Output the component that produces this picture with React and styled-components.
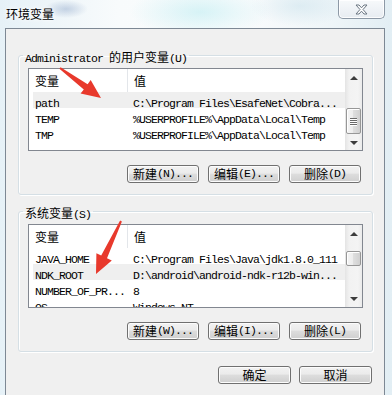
import React from 'react';
import styled, { createGlobalStyle } from 'styled-components';

const GlobalStyle = createGlobalStyle`
  html, body {
    margin: 0;
    padding: 0;
    background: #fff;
  }
  #root {
    width: 392px;
    height: 395px;
  }
`;

// window frame + client
const Window = styled.div`
  position: relative;
  width: 392px;
  height: 395px;
  overflow: hidden;
  display: flex;
  flex-direction: column;
  font-family: "Noto Sans CJK SC", sans-serif;
  color: #000;
  background:
    radial-gradient(ellipse 22px 9px at 66px 9px, rgba(110, 140, 185, 0.35), transparent),
    radial-gradient(ellipse 70px 26px at 200px 12px, rgba(185, 235, 240, 0.55), transparent),
    radial-gradient(ellipse 50px 20px at 300px 6px, rgba(200, 225, 235, 0.5), transparent),
    linear-gradient(to right, #e6f1f7, #f8fbfc 30%, #fbfcfd 60%, #eef5f8 85%, #e2eef4);
`;

const TitleBar = styled.div`
  height: 28px;
  flex: none;
  display: flex;
  justify-content: space-between;
  align-items: flex-start;
`;

const Title = styled.div`
  margin: 6px 0 0 6px;
  font-size: 12px;
  line-height: 16px;
  text-shadow: 0 0 6px #fff, 0 0 3px #fff;
`;

const CloseButton = styled.div`
  width: 47px;
  height: 19px;
  margin-right: 7px;
  box-sizing: border-box;
  border: 1px solid #8d99a6;
  border-top: none;
  border-radius: 0 0 5px 5px;
  background: linear-gradient(#f7f9fb, #e7ecf1);
  box-shadow: inset 0 0 0 1px rgba(255, 255, 255, 0.85);
  display: flex;
  align-items: center;
  justify-content: center;
`;

const Client = styled.div`
  flex: 1;
  margin-left: 5px;
  width: 380px;
  box-sizing: border-box;
  background: #f0f0f0;
  border: 1px solid #7d8894;
  border-bottom: none;
  display: flex;
  flex-direction: column;
`;

const Group = styled.fieldset`
  margin: ${p => p.$top}px 11px 0 12px;
  padding: 0 9px 11px;
  border: 1px solid #d5dfe5;
  border-radius: 3px;
  box-shadow: 1px 1px 0 #fff, inset 1px 1px 0 #fff;
  min-inline-size: 0;
`;

const Legend = styled.legend`
  padding: 0 2px;
  margin-left: -5px;
  height: 14px;
  line-height: 14px;
  white-space: nowrap;
`;

const ListBox = styled.div`
  margin-top: 6px;
  height: ${p => p.$h}px;
  box-sizing: border-box;
  border: 1px solid #828790;
  background: #fff;
  display: flex;
  overflow: hidden;
`;

const Table = styled.div`
  flex: 1;
  min-width: 0;
  overflow: hidden;
`;

const HeaderRow = styled.div`
  display: grid;
  grid-template-columns: 99px 1fr;
  height: 23px;
`;

const HeaderCell = styled.div`
  padding-left: 6px;
  font-size: 12px;
  line-height: 23px;
  border-right: ${p => (p.$divider ? '1px solid #e3e6ea' : 'none')};
`;

const Row = styled.div`
  display: grid;
  grid-template-columns: 94px 1fr;
  margin-left: 4px;
  height: 16px;
  box-sizing: border-box;
  padding-top: 1px;
  line-height: 15px;
  white-space: nowrap;
  background: ${p => (p.$selected ? '#efefef' : 'transparent')};
`;

const Cell = styled.div`
  padding-left: ${p => p.$pad}px;
`;

const ScrollBar = styled.div`
  width: 17px;
  flex: none;
  display: flex;
  flex-direction: column;
  background: linear-gradient(to right, #e4e4e4, #f2f2f2 25%, #f4f4f4 75%, #ebebeb);
`;

const ArrowButton = styled.div`
  height: 17px;
  flex: none;
  display: flex;
  align-items: center;
  justify-content: center;

  &::after {
    content: '';
    border-left: 4px solid transparent;
    border-right: 4px solid transparent;
    ${p => (p.$down ? 'border-top: 4px solid #3d3d3d;' : 'border-bottom: 4px solid #3d3d3d;')}
  }
`;

const Track = styled.div`
  flex: 1;
`;

const Thumb = styled.div`
  margin: ${p => p.$top}px 1px 0;
  height: ${p => p.$h}px;
  box-sizing: border-box;
  border: 1px solid #979797;
  border-radius: 2px;
  background: linear-gradient(to right, #f4f4f4, #ececec 50%, #dedede 50%, #d0d0d0);
  box-shadow: inset 1px 1px 0 #fff;
  display: flex;
  flex-direction: column;
  align-items: center;
  justify-content: center;
  gap: 1px;
`;

const Grip = styled.div`
  width: 7px;
  height: 1px;
  background: #6a6a6a;
  box-shadow: 0 1px 0 #fff;
`;

const ButtonRow = styled.div`
  display: flex;
  justify-content: flex-end;
  gap: 9px;
  margin-top: 14px;
  padding-right: 2px;
`;

const Footer = styled.div`
  display: flex;
  justify-content: flex-end;
  gap: 8px;
  margin: 14px 12px 0 0;
`;

const Button = styled.button`
  width: ${p => p.$w || 72}px;
  height: 18px;
  box-sizing: border-box;
  padding: 0;
  border: 1px solid #707070;
  border-radius: 3px;
  background: linear-gradient(#f2f2f2, #ebebeb 45%, #dddddd 50%, #cfcfcf);
  box-shadow: inset 0 0 0 1px #fcfcfc;
  font: inherit;
  color: #000;
  line-height: 16px;
  display: flex;
  align-items: center;
  justify-content: center;
  white-space: nowrap;
`;

const Latin = styled.span`
  font-family: "Liberation Mono", monospace;
  font-size: 11.5px;
  letter-spacing: -0.9px;
`;

const Han = styled.span`
  font-family: "Noto Sans CJK SC", sans-serif;
  font-size: 12px;
`;

const Overlay = styled.svg`
  position: absolute;
  left: 0;
  top: 0;
  pointer-events: none;
`;

const HAN = /([\u3400-\u9fff]+)/;

function Txt({ children }) {
  return String(children)
    .split(HAN)
    .filter(Boolean)
    .map((s, i) => (HAN.test(s) ? <Han key={i}>{s}</Han> : <Latin key={i}>{s}</Latin>));
}

function arrowPoints(x1, y1, x2, y2) {
  const dx = x2 - x1;
  const dy = y2 - y1;
  const len = Math.hypot(dx, dy);
  const ux = dx / len;
  const uy = dy / len;
  const nx = -uy;
  const ny = ux;
  const head = 19;
  const bx = x2 - ux * head;
  const by = y2 - uy * head;
  const p = (x, y, w) => [x + nx * w, y + ny * w];
  const pts = [
    p(x1, y1, 1),
    p(bx, by, 3.2),
    p(bx, by, 8.5),
    [x2, y2],
    p(bx, by, -8.5),
    p(bx, by, -3.2),
    p(x1, y1, -1),
  ];
  return pts.map(([x, y]) => `${x.toFixed(1)},${y.toFixed(1)}`).join(' ');
}

const userVars = [
  ['path', 'C:\\Program Files\\EsafeNet\\Cobra...', true],
  ['TEMP', '%USERPROFILE%\\AppData\\Local\\Temp'],
  ['TMP', '%USERPROFILE%\\AppData\\Local\\Temp'],
];

const systemVars = [
  ['JAVA_HOME', 'C:\\Program Files\\Java\\jdk1.8.0_111'],
  ['NDK_ROOT', 'D:\\android\\android-ndk-r12b-win...', true],
  ['NUMBER_OF_PR...', '8'],
  ['OS', 'Windows_NT'],
];

function VarList({ rows, height, thumbTop, thumbHeight, grip }) {
  return (
    <ListBox $h={height}>
      <Table>
        <HeaderRow>
          <HeaderCell $divider>变量</HeaderCell>
          <HeaderCell>值</HeaderCell>
        </HeaderRow>
        {rows.map(([name, value, selected]) => (
          <Row key={name} $selected={selected}>
            <Cell $pad={2}><Txt>{name}</Txt></Cell>
            <Cell $pad={6}><Txt>{value}</Txt></Cell>
          </Row>
        ))}
      </Table>
      <ScrollBar>
        <ArrowButton />
        <Track>
          <Thumb $top={thumbTop} $h={thumbHeight}>
            {grip && [0, 1, 2, 3].map(i => <Grip key={i} />)}
          </Thumb>
        </Track>
        <ArrowButton $down />
      </ScrollBar>
    </ListBox>
  );
}

export default function App() {
  return (
    <>
      <GlobalStyle />
      <Window>
        <TitleBar>
          <Title>环境变量</Title>
          <CloseButton>
            <svg width="13" height="11" viewBox="0 0 13 11">
              <polygon
                points="1,1 4,1 6.5,3.8 9,1 12,1 8,5.5 12,10 9,10 6.5,7.2 4,10 1,10 5,5.5"
                fill="#fff"
                stroke="#6b7682"
                strokeWidth="1"
                strokeLinejoin="round"
              />
            </svg>
          </CloseButton>
        </TitleBar>
        <Client>
          <Group $top={19}>
            <Legend><Txt>Administrator 的用户变量(U)</Txt></Legend>
            <VarList rows={userVars} height={83} thumbTop={22} thumbHeight={26} grip />
            <ButtonRow>
              <Button><Txt>新建(N)...</Txt></Button>
              <Button><Txt>编辑(E)...</Txt></Button>
              <Button><Txt>删除(D)</Txt></Button>
            </ButtonRow>
          </Group>
          <Group $top={9}>
            <Legend><Txt>系统变量(S)</Txt></Legend>
            <VarList rows={systemVars} height={84} thumbTop={9} thumbHeight={15} />
            <ButtonRow>
              <Button><Txt>新建(W)...</Txt></Button>
              <Button><Txt>编辑(I)...</Txt></Button>
              <Button><Txt>删除(L)</Txt></Button>
            </ButtonRow>
          </Group>
          <Footer>
            <Button $w={73}><Txt>确定</Txt></Button>
            <Button $w={73}><Txt>取消</Txt></Button>
          </Footer>
        </Client>
        <Overlay width="392" height="395" viewBox="0 0 392 395">
          <polygon points={arrowPoints(60, 68, 101, 98)} fill="#e8392c" />
          <polygon points={arrowPoints(121, 221, 96, 274)} fill="#e8392c" />
        </Overlay>
      </Window>
    </>
  );
}
